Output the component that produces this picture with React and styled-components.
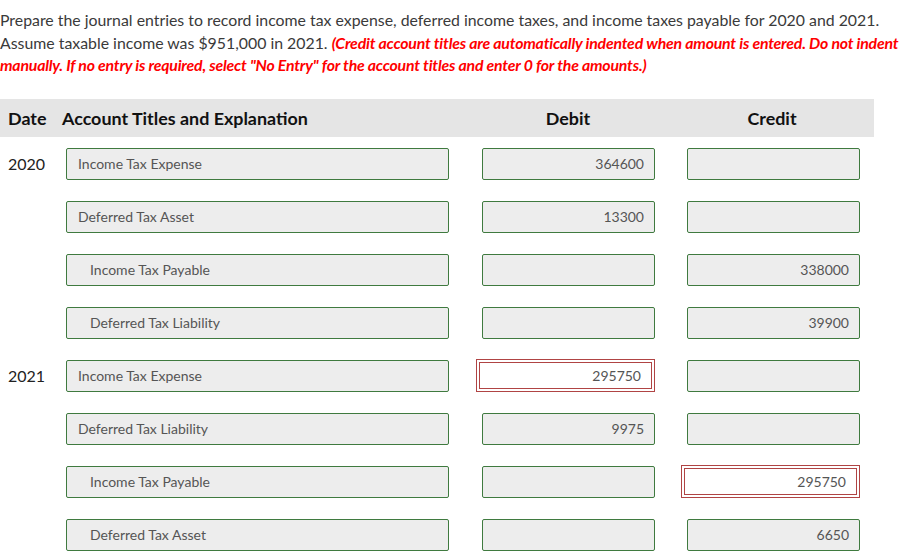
import React from "react";
import styled, { createGlobalStyle } from "styled-components";

const GlobalStyle = createGlobalStyle`
	body {
		margin: 0;
		background: #ffffff;
		font-family: Lato, "Open Sans", sans-serif;
		color: #333333;
	}
`;

const Page = styled.div`
	width: 908px;
	padding-top: 9px;
`;

const Intro = styled.p`
	margin: 0 0 22px 0;
	font-size: 15.85px;
	line-height: 22.5px;
	color: #3a3a3a;
	white-space: nowrap;
`;

const Warn = styled.span`
	color: #ff0000;
	font-style: italic;
	font-weight: bold;
	letter-spacing: -0.2px;
`;

const Grid = styled.div`
	width: 874px;
	display: grid;
	grid-template-columns: 58px 408px 204px 204px;
`;

const HeadCell = styled.div`
	background: #e5e5e5;
	height: 38px;
	display: flex;
	align-items: center;
	justify-content: ${p => (p.center ? "center" : "flex-start")};
	padding-left: ${p => p.pad || 0}px;
	font-size: 17.9px;
	font-weight: bold;
	color: #111111;
	margin-bottom: 11px;
`;

const DateCell = styled.div`
	height: 32px;
	display: flex;
	align-items: center;
	padding-left: 8px;
	font-size: 16px;
	color: #222222;
	margin-bottom: 21px;
`;

const Cell = styled.div`
	height: 32px;
	padding-left: ${p => p.left}px;
	margin-bottom: 21px;
	display: flex;
`;

const Field = styled.div`
	box-sizing: border-box;
	width: ${p => p.width}px;
	height: 32px;
	border: 1px solid #3f7a3f;
	border-radius: 2px;
	background: #ededed;
	display: flex;
	align-items: center;
	justify-content: ${p => (p.num ? "flex-end" : "flex-start")};
	padding: ${p => (p.num ? "0 10px 0 0" : `0 0 0 ${p.indent ? 23 : 11}px`)};
	font-size: 14px;
	color: #555555;
`;

const ErrorField = styled.div`
	box-sizing: border-box;
	width: 179px;
	height: 33px;
	margin-left: -6px;
	margin-top: -1px;
	border: 1px solid #b04444;
	box-shadow: inset 0 0 0 2px #ffffff, inset 0 0 0 3px #b04444;
	background: #ffffff;
	display: flex;
	align-items: center;
	justify-content: flex-end;
	padding-right: 13px;
	font-size: 14px;
	color: #555555;
`;

const rows = [
	{ date: "2020", title: "Income Tax Expense", debit: "364600", credit: "" },
	{ date: "", title: "Deferred Tax Asset", debit: "13300", credit: "" },
	{ date: "", title: "Income Tax Payable", indent: true, debit: "", credit: "338000" },
	{ date: "", title: "Deferred Tax Liability", indent: true, debit: "", credit: "39900" },
	{ date: "2021", title: "Income Tax Expense", debit: "295750", credit: "", debitErr: true },
	{ date: "", title: "Deferred Tax Liability", debit: "9975", credit: "" },
	{ date: "", title: "Income Tax Payable", indent: true, debit: "", credit: "295750", creditErr: true },
	{ date: "", title: "Deferred Tax Asset", indent: true, debit: "", credit: "6650" },
];

const Amount = ({ value, error }) =>
	error ? <ErrorField>{value}</ErrorField> : <Field num width={173}>{value}</Field>;

const App = () => {
	return (
		<>
			<GlobalStyle />
			<Page>
				<Intro>
					Prepare the journal entries to record income tax expense, deferred income taxes, and income taxes payable for 2020 and 2021.
					<br />
					Assume taxable income was $951,000 in 2021. <Warn>(Credit account titles are automatically indented when amount is entered. Do not indent</Warn>
					<br />
					<Warn>manually. If no entry is required, select "No Entry" for the account titles and enter 0 for the amounts.)</Warn>
				</Intro>
				<Grid>
					<HeadCell pad={8}>Date</HeadCell>
					<HeadCell pad={4}>Account Titles and Explanation</HeadCell>
					<HeadCell center>Debit</HeadCell>
					<HeadCell center>Credit</HeadCell>
					{rows.map((r, i) => (
						<React.Fragment key={i}>
							<DateCell>{r.date}</DateCell>
							<Cell left={8}>
								<Field width={383} indent={r.indent}>{r.title}</Field>
							</Cell>
							<Cell left={16}>
								<Amount value={r.debit} error={r.debitErr} />
							</Cell>
							<Cell left={17}>
								<Amount value={r.credit} error={r.creditErr} />
							</Cell>
						</React.Fragment>
					))}
				</Grid>
			</Page>
		</>
	);
};

export default App;
